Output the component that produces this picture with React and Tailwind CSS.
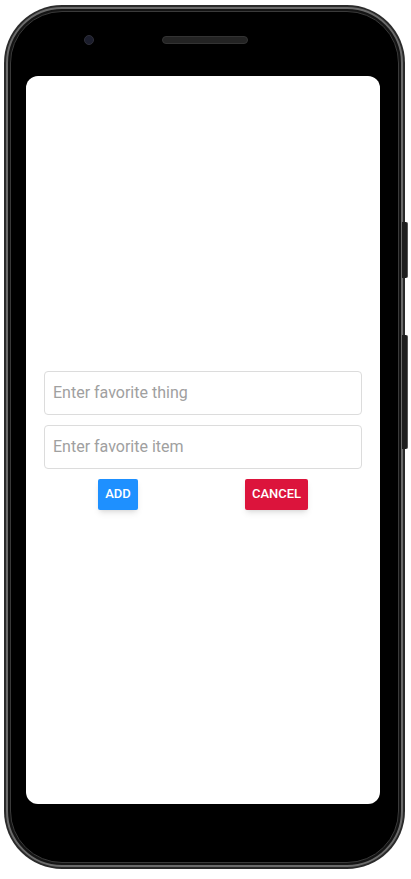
import React from 'react'

export default function App() {
  return (
    <div className="relative w-[411px] h-[879px] bg-white pl-[4px] pt-[5px]" style={{ fontFamily: 'Roboto, "Noto Sans", sans-serif' }}>
      {/* side buttons */}
      <div className="absolute left-[402px] top-[222px] w-[6px] h-[56px] rounded-r-[2px] bg-[#1e1e1e] border-r border-[#555]" />
      <div className="absolute left-[402px] top-[335px] w-[6px] h-[114px] rounded-r-[2px] bg-[#1e1e1e] border-r border-[#555]" />

      <div className="w-[401px] h-[864px] rounded-[58px] bg-[#2a2a2a] p-[2px]">
        <div className="w-full h-full rounded-[56px] border-2 border-[#6b6b6b] bg-[#141414] p-[2px]">
          <div className="w-full h-full rounded-[52px] border border-[#3a3a3a] bg-black flex flex-col pl-[15px] pt-[23px]">
            {/* camera + speaker */}
            <div className="flex items-center h-[10px]">
              <div className="ml-[58px] w-[10px] h-[10px] rounded-full bg-[#1b1d2c] border border-[#2e2e38]" />
              <div className="ml-[68px] w-[86px] h-[8px] rounded-full bg-[#232323] border border-[#333]" />
            </div>

            {/* screen */}
            <div className="mt-[31px] w-[354px] h-[728px] rounded-[12px] bg-white flex flex-col justify-center px-[18px]">
              <input
                className="h-[44px] w-full rounded-[4px] border border-[#dcdcdc] px-[8px] text-[16px] text-[#333] placeholder:text-[#a0a0a0] outline-none"
                placeholder="Enter favorite thing"
              />
              <input
                className="mt-[10px] h-[44px] w-full rounded-[4px] border border-[#dcdcdc] px-[8px] text-[16px] text-[#333] placeholder:text-[#a0a0a0] outline-none"
                placeholder="Enter favorite item"
              />
              <div className="mt-[10px] flex justify-between px-[54px]">
                <button className="h-[31px] w-[40px] rounded-[2px] bg-[#1e90ff] text-[13px] font-medium text-white shadow-md">
                  ADD
                </button>
                <button className="h-[31px] w-[63px] rounded-[2px] bg-[#dc143c] text-[13px] font-medium text-white shadow-md">
                  CANCEL
                </button>
              </div>
            </div>
          </div>
        </div>
      </div>
    </div>
  )
}
